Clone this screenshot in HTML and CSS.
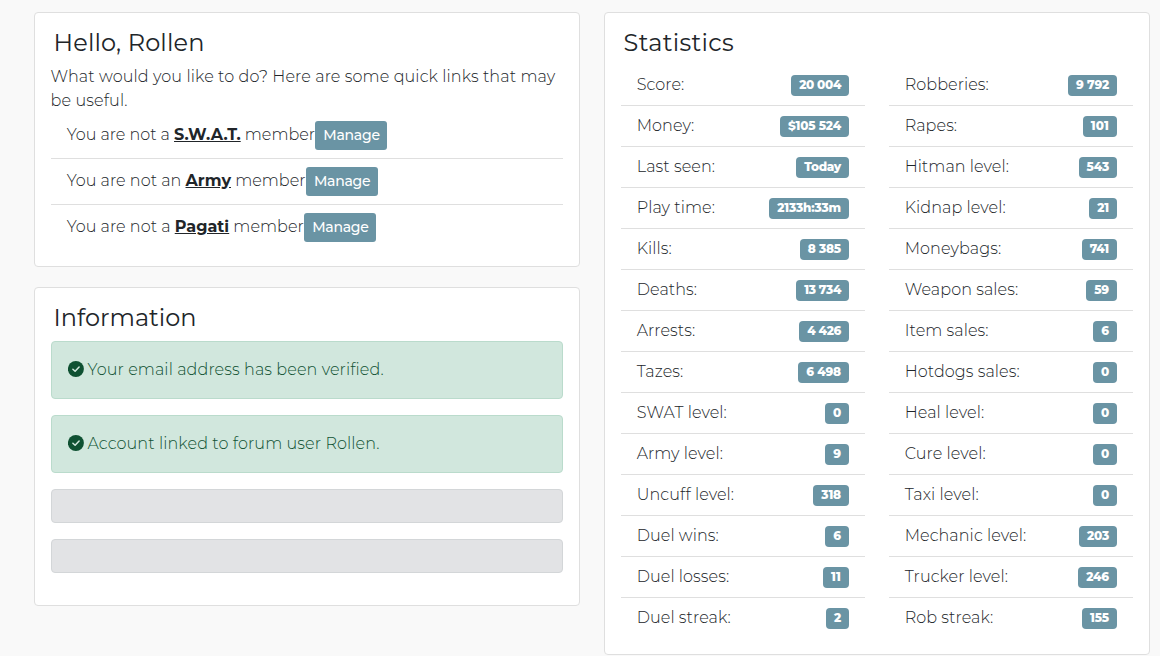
FILE: index.html
```html
<!DOCTYPE html>
<html lang="en">
<head>
<meta charset="utf-8">
<title>Dashboard</title>
<link rel="stylesheet" href="styles.css">
</head>
<body>
<main class="page">
  <div class="column">
    <section class="card">
      <h4 class="title hello">Hello, Rollen</h4>
      <p class="intro">What would you like to do? Here are some quick links that may be useful.</p>
      <ul class="list groups">
        <li><span class="swat">You are not a <a>S.W.A.T.</a> member</span><button class="btn">Manage</button></li>
        <li><span>You are not an <a>Army</a> member</span><button class="btn">Manage</button></li>
        <li><span>You are not a <a>Pagati</a> member</span><button class="btn">Manage</button></li>
      </ul>
    </section>
    <section class="card">
      <h4 class="title info">Information</h4>
      <div class="alert success"><svg class="check" viewBox="0 0 16 16"><circle cx="8" cy="8" r="8"/><path d="M5 8.2 7.2 10.3 11.2 6"/></svg><span>Your email address has been verified.</span></div>
      <div class="alert success"><svg class="check" viewBox="0 0 16 16"><circle cx="8" cy="8" r="8"/><path d="M5 8.2 7.2 10.3 11.2 6"/></svg><span>Account linked to forum user Rollen.</span></div>
      <div class="alert secondary"></div>
      <div class="alert secondary"></div>
    </section>
  </div>
  <section class="card">
    <h4 class="title stats-title">Statistics</h4>
    <div class="stats">
      <ul class="list">
        <li><span>Score:</span><b class="badge tight">20 004</b></li>
        <li><span>Money:</span><b class="badge">$105 524</b></li>
        <li><span>Last seen:</span><b class="badge tight">Today</b></li>
        <li><span>Play time:</span><b class="badge">2133h:33m</b></li>
        <li><span>Kills:</span><b class="badge">8 385</b></li>
        <li><span>Deaths:</span><b class="badge tight">13 734</b></li>
        <li><span>Arrests:</span><b class="badge tight">4 426</b></li>
        <li><span>Tazes:</span><b class="badge">6 498</b></li>
        <li><span>SWAT level:</span><b class="badge">0</b></li>
        <li><span>Army level:</span><b class="badge">9</b></li>
        <li><span>Uncuff level:</span><b class="badge">318</b></li>
        <li><span>Duel wins:</span><b class="badge">6</b></li>
        <li><span>Duel losses:</span><b class="badge wide">11</b></li>
        <li><span>Duel streak:</span><b class="badge">2</b></li>
      </ul>
      <ul class="list">
        <li><span>Robberies:</span><b class="badge">9 792</b></li>
        <li><span>Rapes:</span><b class="badge wide">101</b></li>
        <li><span>Hitman level:</span><b class="badge">543</b></li>
        <li><span>Kidnap level:</span><b class="badge">21</b></li>
        <li><span>Moneybags:</span><b class="badge">741</b></li>
        <li><span>Weapon sales:</span><b class="badge">59</b></li>
        <li><span>Item sales:</span><b class="badge">6</b></li>
        <li><span>Hotdogs sales:</span><b class="badge">0</b></li>
        <li><span>Heal level:</span><b class="badge">0</b></li>
        <li><span>Cure level:</span><b class="badge">0</b></li>
        <li><span>Taxi level:</span><b class="badge">0</b></li>
        <li><span>Mechanic level:</span><b class="badge">203</b></li>
        <li><span>Trucker level:</span><b class="badge">246</b></li>
        <li><span>Rob streak:</span><b class="badge">155</b></li>
      </ul>
    </div>
  </section>
</main>
</body>
</html>
```
FILE: styles.css
```css
* { box-sizing: border-box; }
body {
  margin: 0;
  background: #f9f9f9;
  color: #212529;
  font: 300 16px/24px Montserrat, Inter, sans-serif;
}
.page { display: grid; grid-template-columns: 546px 546px; gap: 24px; align-items: start; padding: 12px 10px 0 34px; }
.column { display: grid; gap: 20px; }
.card { padding: 16px; background: #fff; border: 1px solid #dfdfdf; border-radius: 4px; }
.title { margin: 0 0 8px; padding-left: 2.6px; font-size: 24px; font-weight: 400; line-height: 28px; letter-spacing: .15px; }
.info { margin-bottom: 9px; letter-spacing: 0; }
.stats-title { letter-spacing: .3px; }
.intro { margin: 0 0 0 -.4px; letter-spacing: .12px; }
.list { margin: 0; padding: 0; list-style: none; letter-spacing: .08px; }
.list li { display: flex; justify-content: space-between; align-items: center; height: 41px; padding: 0 16px 0 15.7px; border-bottom: 1px solid #dfdfdf; white-space: nowrap; }
.list li:last-child { height: 40px; border-bottom: 0; }
.groups li, .groups li:last-child { justify-content: flex-start; height: 46px; }
.groups li:last-child { height: 45px; }
.groups span { margin-top: -2px; letter-spacing: .04px; }
.groups .swat { letter-spacing: -.01px; }
.groups a { color: #212529; font-weight: 700; text-decoration: underline; }
.btn { width: 72px; height: 29px; padding: 0 0 0 1px; border: 0; border-radius: 3px; background: #6a94a4; color: #fff; font: 500 14px/21px Montserrat, Inter, sans-serif; letter-spacing: -.25px; }
.alert { display: flex; align-items: center; height: 58px; margin-bottom: 16px; padding: 0 16px 0 15.5px; border: 1px solid; border-radius: 4px; letter-spacing: .11px; }
.success { color: #0f5132; background: #d1e7dd; border-color: #badbcc; }
.secondary { height: 34px; background: #e2e3e5; border-color: #d3d6d8; }
.check { flex: none; width: 16px; height: 16px; margin: -2px 4px 0 0; transform: translateX(-.1px); }
.check circle { fill: #0f5132; }
.check path { fill: none; stroke: #d1e7dd; stroke-width: 1.5; stroke-linecap: round; stroke-linejoin: round; }
.stats { display: grid; grid-template-columns: 1fr 1fr; gap: 24px; }
.badge { height: 21px; margin-top: 1px; padding: 0 8px; border-radius: 4px; background: #6a94a4; color: #fff; font-size: 12px; font-weight: 800; line-height: 20px; letter-spacing: -.15px; }
.tight { letter-spacing: -.32px; }
.wide { letter-spacing: .1px; }
```
